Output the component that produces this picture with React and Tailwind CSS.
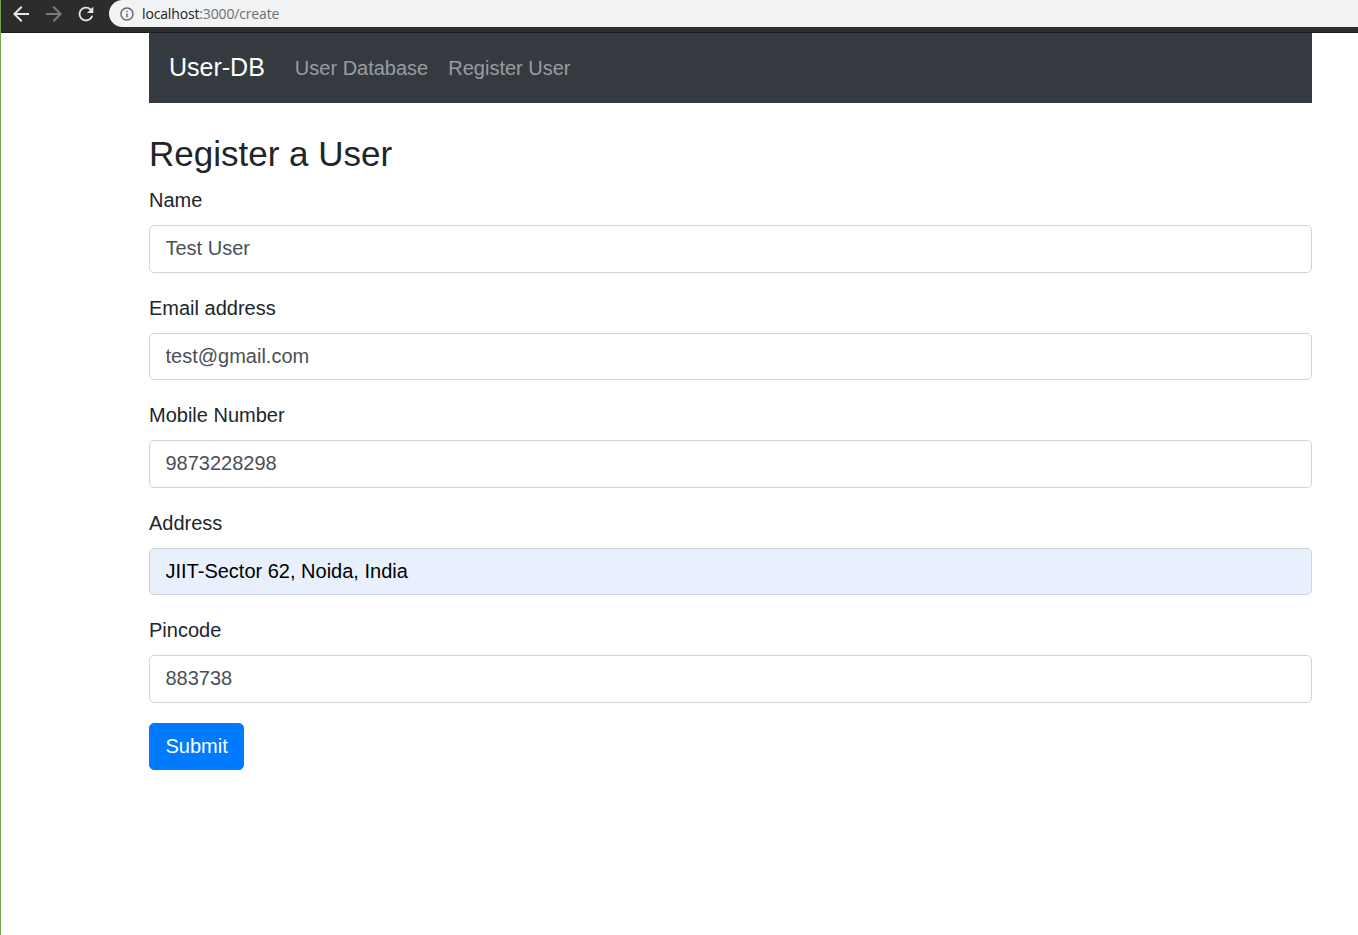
import React from 'react';

// Material-style browser icons
const BackIcon = ({ className }) => (
  <svg viewBox="0 0 24 24" className={className} fill="currentColor">
    <path d="M20 11H7.83l5.59-5.59L12 4l-8 8 8 8 1.41-1.41L7.83 13H20v-2z" />
  </svg>
);

const ForwardIcon = ({ className }) => (
  <svg viewBox="0 0 24 24" className={className} fill="currentColor">
    <path d="M12 4l-1.41 1.41L16.17 11H4v2h12.17l-5.58 5.59L12 20l8-8z" />
  </svg>
);

const ReloadIcon = ({ className }) => (
  <svg viewBox="0 0 24 24" className={className} fill="currentColor">
    <path d="M17.65 6.35C16.2 4.9 14.21 4 12 4c-4.42 0-7.99 3.58-7.99 8s3.57 8 7.99 8c3.73 0 6.84-2.55 7.73-6h-2.08c-.82 2.33-3.04 4-5.65 4-3.31 0-6-2.69-6-6s2.69-6 6-6c1.66 0 3.14.69 4.22 1.78L13 11h7V4l-2.35 2.35z" />
  </svg>
);

const InfoIcon = ({ className }) => (
  <svg viewBox="0 0 24 24" className={className} fill="currentColor">
    <path d="M11 7h2v2h-2zm0 4h2v6h-2zm1-9C6.48 2 2 6.48 2 12s4.48 10 10 10 10-4.48 10-10S17.52 2 12 2zm0 18c-4.41 0-8-3.59-8-8s3.59-8 8-8 8 3.59 8 8-3.59 8-8 8z" />
  </svg>
);

const fields = [
  { label: 'Name', value: 'Test User' },
  { label: 'Email address', value: 'test@gmail.com' },
  { label: 'Mobile Number', value: '9873228298' },
  { label: 'Address', value: 'JIIT-Sector 62, Noida, India', autofill: true },
  { label: 'Pincode', value: '883738' },
];

const BrowserBar = () => (
  <div className="h-[33px] bg-[#2c2c2c] border-b border-[#1c1c1c] flex items-start">
    <div className="flex items-center h-[27px]">
      <BackIcon className="w-6 h-6 ml-[8px] text-[#e6e6e6]" />
      <ForwardIcon className="w-6 h-6 ml-[9px] text-[#7b7b7b]" />
      <ReloadIcon className="w-[22px] h-[22px] ml-[9px] text-[#e6e6e6]" />
    </div>
    <div className="flex-1 ml-[12px] h-[27px] bg-[#f1f3f4] rounded-l-[14px] flex items-center pl-[10px]">
      <InfoIcon className="w-4 h-4 text-[#5f6368]" />
      <span className="ml-[7px] text-[14px] font-['Open_Sans',sans-serif] tracking-[-0.15px]">
        <span className="text-[#202124]">localhost</span>
        <span className="text-[#6b6f73]">:3000/create</span>
      </span>
    </div>
  </div>
);

const Navbar = () => (
  <nav className="h-[70px] bg-[#343a40] px-[20px] flex items-center">
    <span className="text-[25px] text-white mr-[20px]">User-DB</span>
    <span className="px-[10px] text-[20px] text-white/50">User Database</span>
    <span className="px-[10px] text-[20px] text-white/50">Register User</span>
  </nav>
);

export default function App() {
  return (
    <div className="min-h-[935px] bg-white border-l border-[#73a44f] font-['Liberation_Sans',Arial,sans-serif] text-[#212529]">
      <BrowserBar />
      <div className="ml-[148px] w-[1163px]">
        <Navbar />
        <h3 className="mt-[30px] mb-[10px] text-[35px] leading-[42px] font-normal">Register a User</h3>
        <form onSubmit={(e) => e.preventDefault()}>
          {fields.map((f) => (
            <div key={f.label} className="mb-[20px]">
              <label className="block text-[20px] leading-[30px] mb-[10px]">{f.label}</label>
              <input
                type="text"
                defaultValue={f.value}
                className={
                  f.autofill
                    ? 'block w-full h-[47.5px] px-[15.5px] border border-[#ced4da] rounded-[5px] text-[20px] bg-[#e8f0fe] text-black outline-none'
                    : 'block w-full h-[47.5px] px-[15.5px] border border-[#ced4da] rounded-[5px] text-[20px] bg-white text-[#495057] outline-none'
                }
              />
            </div>
          ))}
          <button type="submit" className="h-[47.5px] px-[15.5px] bg-[#007bff] border border-[#007bff] text-white text-[20px] rounded-[5px]">
            Submit
          </button>
        </form>
      </div>
    </div>
  );
}
